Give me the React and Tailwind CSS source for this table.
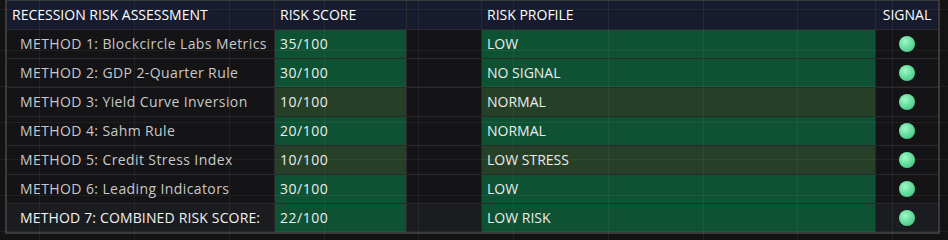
import React from "react";

const rows = [
  { label: "METHOD 1: Blockcircle Labs Metrics", score: "35/100", profile: "LOW", tone: "green" },
  { label: "METHOD 2: GDP 2-Quarter Rule", score: "30/100", profile: "NO SIGNAL", tone: "green" },
  { label: "METHOD 3: Yield Curve Inversion", score: "10/100", profile: "NORMAL", tone: "olive" },
  { label: "METHOD 4: Sahm Rule", score: "20/100", profile: "NORMAL", tone: "green" },
  { label: "METHOD 5: Credit Stress Index", score: "10/100", profile: "LOW STRESS", tone: "olive" },
  { label: "METHOD 6: Leading Indicators", score: "30/100", profile: "LOW", tone: "green" },
  { label: "METHOD 7: COMBINED RISK SCORE:", score: "22/100", profile: "LOW RISK", tone: "green", total: true },
];

const vLines = [39, 134, 229, 324, 418, 513, 608, 703, 797, 892];
const hLines = [9, 50, 86, 122, 159, 195, 231];

function Dot() {
  return (
    <span className="block h-[16px] w-[16px] rounded-full bg-[radial-gradient(circle_at_38%_35%,#a2f7c8_0%,#66e09f_45%,#3fb279_100%)]" />
  );
}

export default function App() {
  return (
    <div
      className="relative h-[240px] w-[948px] overflow-hidden bg-[#131313] text-[14px] leading-none"
      style={{ fontFamily: '"Open Sans", sans-serif' }}
    >
      <div className="pl-[5px]">
        <div className="w-[935px] border-x-2 border-b-2 border-t border-[#3a3a3c]">
          <div className="grid grid-cols-[267px_131px_74px_393px_62px] gap-px bg-[#2a2a2c]">
            <div className="flex h-[28px] items-center bg-[#161b2e] pl-[5px] text-white">RECESSION RISK ASSESSMENT</div>
            <div className="flex h-[28px] items-center bg-[#161b2e] pl-[5px] text-white">RISK SCORE</div>
            <div className="h-[28px] bg-[#161b2e]" />
            <div className="flex h-[28px] items-center bg-[#161b2e] pl-[5px] text-white">RISK PROFILE</div>
            <div className="flex h-[28px] items-center justify-center bg-[#161b2e] text-white">SIGNAL</div>
            {rows.map((r) => {
              const base = r.total ? "bg-[#1b1c20]" : "bg-[#141416]";
              const tone = r.tone === "olive" ? "bg-[#263f27]" : "bg-[#0e5233]";
              return (
                <React.Fragment key={r.label}>
                  <div
                    className={`flex h-[28px] items-center whitespace-nowrap pl-[13px] ${base} ${
                      r.total ? "tracking-[0.15px] text-[#f2f2f2]" : "tracking-[0.4px] text-[#c8c8c8]"
                    }`}
                  >
                    {r.label}
                  </div>
                  <div className={`flex h-[28px] items-center pl-[5px] tracking-[0.5px] text-[#ececec] ${tone}`}>{r.score}</div>
                  <div className={`h-[28px] ${base}`} />
                  <div className={`flex h-[28px] items-center pl-[5px] text-[#ececec] ${tone}`}>{r.profile}</div>
                  <div className={`flex h-[28px] items-center justify-center ${base}`}>
                    <Dot />
                  </div>
                </React.Fragment>
              );
            })}
          </div>
        </div>
      </div>
      <div className="pointer-events-none absolute inset-0">
        {vLines.map((x) => (
          <div key={"v" + x} className="absolute top-0 h-full w-px bg-white/[0.05]" style={{ left: x }} />
        ))}
        {hLines.map((y) => (
          <div key={"h" + y} className="absolute left-0 h-px w-full bg-white/[0.05]" style={{ top: y }} />
        ))}
      </div>
    </div>
  );
}
